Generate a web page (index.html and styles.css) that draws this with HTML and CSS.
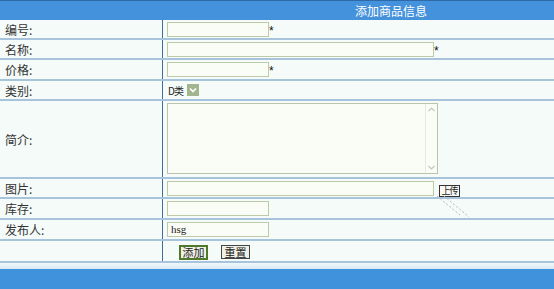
FILE: index.html
```html
<!DOCTYPE html>
<html lang="zh">
<head>
  <meta charset="UTF-8">
  <title>添加商品信息</title>
  <link rel="stylesheet" href="styles.css">
</head>
<body>
  <div class="head">添加商品信息</div>
  <div class="form">
    <div class="row">
      <div class="label">编号:</div>
      <div class="field"><span class="input short"></span><span class="req">*</span></div>
    </div>
    <div class="row">
      <div class="label">名称:</div>
      <div class="field"><span class="input long"></span><span class="req">*</span></div>
    </div>
    <div class="row r21">
      <div class="label">价格:</div>
      <div class="field"><span class="input short"></span><span class="req">*</span></div>
    </div>
    <div class="row">
      <div class="label">类别:</div>
      <div class="field">
        <span class="select">D类<span class="arrow"><svg width="12" height="12" viewBox="0 0 12 12"><path d="M3 4.5 L6 7.5 L9 4.5" fill="none" stroke="#fff" stroke-width="1.6"/></svg></span></span>
      </div>
    </div>
    <div class="row tall">
      <div class="label">简介:</div>
      <div class="field">
        <div class="textarea">
          <div class="ta-body"></div>
          <div class="scroll">
            <svg width="11" height="11" viewBox="0 0 11 11"><path d="M2.5 7 L5.5 4 L8.5 7" fill="none" stroke="#c4c8c0" stroke-width="1.2"/></svg>
            <svg width="11" height="11" viewBox="0 0 11 11"><path d="M2.5 4 L5.5 7 L8.5 4" fill="none" stroke="#c4c8c0" stroke-width="1.2"/></svg>
          </div>
        </div>
      </div>
    </div>
    <div class="row">
      <div class="label">图片:</div>
      <div class="field pic">
        <span class="input long"></span><span class="upload">上传</span>
        <svg class="drag" width="36" height="26" viewBox="0 0 36 26"><path d="M1 1 L24 20 M8 1 L33 22" stroke="#b8b8b8" stroke-width="1" stroke-dasharray="2 2" fill="none"/></svg>
      </div>
    </div>
    <div class="row r21">
      <div class="label">库存:</div>
      <div class="field"><span class="input short"></span></div>
    </div>
    <div class="row r21">
      <div class="label">发布人:</div>
      <div class="field"><span class="input short">hsg</span></div>
    </div>
    <div class="row r22">
      <div class="label"></div>
      <div class="field btns"><span class="btn add">添加</span><span class="btn">重置</span></div>
    </div>
  </div>
  <div class="strip"></div>
  <div class="foot"></div>
</body>
</html>
```

FILE: styles.css
```css
body {
  margin: 0;
  font-family: "Noto Sans CJK SC", "DejaVu Sans", sans-serif;
  font-size: 12px;
  color: #222;
  background: #f5fbf8;
}
.head {
  height: 19px;
  border-top: 1px solid #2f6aa8;
  background: #4592dc;
  color: #fff;
  line-height: 19px;
  padding-left: 355px;
}
.row {
  display: grid;
  grid-template-columns: 163px 1fr;
  height: 20px;
  box-sizing: border-box;
  border-bottom: 2px solid #3c6d9d;
  border-image: linear-gradient(#2f5f8f 50%, #a8c4dc 50%) 1;
  border-image-width: 0 0 2px 0;
}
.r21 { height: 21px; }
.r22 { height: 22px; }
.tall { height: 78px; }
.label {
  border-right: 1px solid #3c6d9d;
  padding-left: 5px;
  display: flex;
  align-items: center;
  color: #333;
}
.field {
  display: flex;
  align-items: center;
  padding-left: 4px;
}
.input {
  height: 15px;
  box-sizing: border-box;
  border: 1px solid #bccaa8;
  background: #fafdf5;
  font-family: "Liberation Serif", serif;
  font-size: 11px;
  line-height: 13px;
  padding-left: 3px;
}
.short { width: 102px; }
.long { width: 267px; }
.req {
  font-family: "Liberation Sans", sans-serif;
  font-size: 12px;
  color: #111;
  margin-top: 3px;
}
.select {
  display: flex;
  align-items: center;
  gap: 1px;
  font-size: 10px;
  padding-left: 1px;
  letter-spacing: -1px;
}
.arrow {
  display: flex;
  width: 12px;
  height: 12px;
  background: #a2b58f;
  margin-left: 3px;
}
.textarea {
  display: flex;
  width: 271px;
  height: 71px;
  box-sizing: border-box;
  border: 1px solid #bcc4ac;
  background: #fafdf5;
  margin-top: -2px;
}
.ta-body { flex: 1; }
.scroll {
  width: 11px;
  border-left: 1px solid #e6e8e2;
  display: flex;
  flex-direction: column;
  justify-content: space-between;
}
.pic { position: relative; }
.upload {
  margin-left: 5px;
  margin-top: 5px;
  height: 12px;
  width: 21px;
  box-sizing: border-box;
  border: 1px solid #333;
  background: #f8f8f4;
  font-size: 9px;
  line-height: 10px;
  text-align: center;
  white-space: nowrap;
  letter-spacing: -1px;
  overflow: hidden;
}
.drag {
  position: absolute;
  left: 273px;
  top: 16px;
}
.btns {
  padding-left: 16px;
  gap: 13px;
}
.btn {
  height: 14px;
  width: 29px;
  box-sizing: border-box;
  border: 1px solid #444;
  background: #f0f0e6;
  font-size: 11px;
  line-height: 12px;
  text-align: center;
  margin-top: 2px;
}
.btn.add {
  border: 2px solid #4f7a2c;
  height: 15px;
  line-height: 11px;
}
.strip {
  height: 6px;
  background: linear-gradient(#f2f8fc, #d8e8f4);
}
.foot {
  height: 20px;
  background: #4192dc;
}
```
